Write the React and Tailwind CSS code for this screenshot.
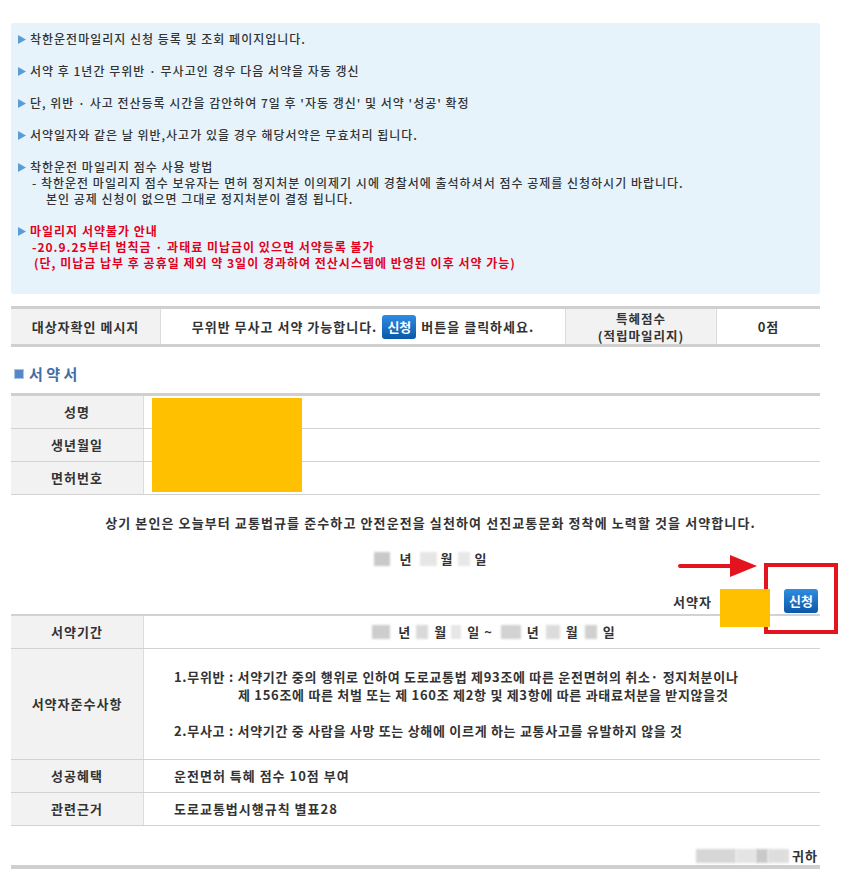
import React from "react";

const Tri = () => (
  <svg width="8" height="9" viewBox="0 0 8 9" className="shrink-0 mt-[3.5px]">
    <path d="M0 0 L8 4.5 L0 9 Z" fill="#5b9bd8" />
  </svg>
);

const Item = ({ children, red }) => (
  <div className={red ? "flex gap-[4px] font-bold text-[#e2001c]" : "flex gap-[4px]"}>
    <Tri />
    <div>{children}</div>
  </div>
);

const Btn = () => (
  <span className="inline-flex w-[34px] h-[24px] items-center justify-center rounded-[3px] bg-linear-to-b from-[#2e8de2] to-[#0a58a8] text-white font-bold text-[13px] tracking-normal">
    신청
  </span>
);

const Blk = ({ className }) => (
  <span className={"inline-block h-[14px] blur-[1px] " + className} />
);

const Label = ({ children }) => (
  <div className="w-[133px] shrink-0 bg-[#f2f2f2] border-r border-[#dcdcdc] flex items-center justify-center">
    {children}
  </div>
);

export default function App() {
  return (
    <div className="relative w-[856px] h-[875px] bg-white pl-[11px] pr-[36px] pt-[23px] font-['Noto_Sans_CJK_KR','Noto_Sans',sans-serif] text-[#333] tracking-[1px]">
      {/* 안내 박스 */}
      <div className="bg-[#e6f3fb] rounded-[3px] pl-[7px] pt-[8px] pb-[23px] text-[12px] leading-4 text-[#333] font-medium">
        <div className="flex flex-col gap-4">
          <Item>착한운전마일리지 신청 등록 및 조회 페이지입니다.</Item>
          <Item>서약 후 1년간 무위반 · 무사고인 경우 다음 서약을 자동 갱신</Item>
          <Item>단, 위반 · 사고 전산등록 시간을 감안하여 7일 후 '자동 갱신' 및 서약 '성공' 확정</Item>
          <Item>서약일자와 같은 날 위반,사고가 있을 경우 해당서약은 무효처리 됩니다.</Item>
          <Item>
            <div>착한운전 마일리지 점수 사용 방법</div>
            <div className="pl-[2px]">- 착한운전 마일리지 점수 보유자는 면허 정지처분 이의제기 시에 경찰서에 출석하셔서 점수 공제를 신청하시기 바랍니다.</div>
            <div className="pl-[16px]">본인 공제 신청이 없으면 그대로 정지처분이 결정 됩니다.</div>
          </Item>
          <Item red>
            <div>마일리지 서약불가 안내</div>
            <div className="pl-[2px]">-20.9.25부터 범칙금 · 과태료 미납금이 있으면 서약등록 불가</div>
            <div className="pl-[4px]">(단, 미납금 납부 후 공휴일 제외 약 3일이 경과하여 전산시스템에 반영된 이후 서약 가능)</div>
          </Item>
        </div>
      </div>

      {/* 대상자확인 */}
      <div className="mt-[12px] flex h-[41px] border-y-[3px] border-[#cfcfcf] text-[13px] font-bold text-[#333]">
        <div className="w-[150px] bg-[#f2f2f2] border-r border-[#dcdcdc] flex items-center justify-center">
          대상자확인 메시지
        </div>
        <div className="w-[405px] border-r border-[#dcdcdc] flex items-center justify-center gap-[5px]">
          <span>무위반 무사고 서약 가능합니다.</span>
          <Btn />
          <span>버튼을 클릭하세요.</span>
        </div>
        <div className="w-[151px] bg-[#f2f2f2] border-r border-[#dcdcdc] flex flex-col items-center justify-center text-[12.5px] leading-[17px]">
          <span>특혜점수</span>
          <span>(적립마일리지)</span>
        </div>
        <div className="flex-1 flex items-center justify-center">0점</div>
      </div>

      {/* 서약서 제목 */}
      <div className="mt-[18px] h-[18px] flex items-center gap-[5px] pl-[3px] text-[15px] font-bold text-[#3f6fa6] tracking-normal">
        <span className="w-[10px] h-[10px] border border-[#a9c6e6] bg-[#5588c8]" />
        <span>서 약 서</span>
      </div>

      {/* 인적사항 */}
      <div className="relative mt-[10px] border-t-[3px] border-[#cfcfcf] text-[13px] font-bold">
        {["성명", "생년월일", "면허번호"].map((l) => (
          <div key={l} className="flex h-[33px] border-b border-[#d2d2d2]">
            <Label>{l}</Label>
            <div className="flex-1" />
          </div>
        ))}
        <div className="absolute left-[141px] top-[2px] w-[150px] h-[94px] bg-[#ffc000]" />
      </div>

      <div className="mt-[20px] pl-[30px] leading-4 text-[13px] font-bold text-center tracking-[1.1px]">
        상기 본인은 오늘부터 교통법규를 준수하고 안전운전을 실천하여 선진교통문화 정착에 노력할 것을 서약합니다.
      </div>

      <div className="mt-[20px] pl-[30px] h-4 flex items-center justify-center text-[13px] font-bold">
        <Blk className="w-[16px] bg-[#c9c9c9]" />
        <span className="ml-[10px]">년</span>
        <Blk className="ml-[7px] w-[17px] bg-[#e6e6e6]" />
        <span className="ml-[4px]">월</span>
        <Blk className="ml-[5px] w-[12px] bg-[#e8e8e8]" />
        <span className="ml-[4px]">일</span>
      </div>

      {/* 서약자 */}
      <div className="mt-[22px] h-[25px] flex justify-end pr-[2px] text-[13px] font-bold">
        <span className="self-center">서약자</span>
        <div className="relative z-10 ml-[8px] w-[50px] h-[38px] bg-[#ffc000]" />
        <div className="ml-[14px]">
          <Btn />
        </div>
      </div>

      {/* 서약내용 */}
      <div className="border-t-2 border-[#d2d2d2] text-[13px] font-bold">
        <div className="flex h-[33px] border-b border-[#d2d2d2]">
          <Label>서약기간</Label>
          <div className="flex-1 flex items-center justify-center pl-[24px]">
            <Blk className="w-[18px] bg-[#cdcdcd]" />
            <span className="ml-[8px]">년</span>
            <Blk className="ml-[5px] w-[12px] bg-[#d9d9d9]" />
            <span className="ml-[6px]">월</span>
            <Blk className="ml-[4px] w-[10px] bg-[#e6e6e6]" />
            <span className="ml-[6px]">일 ~</span>
            <Blk className="ml-[8px] w-[20px] bg-[#d2d2d2]" />
            <span className="ml-[6px]">년</span>
            <Blk className="ml-[6px] w-[14px] bg-[#dcdcdc]" />
            <span className="ml-[6px]">월</span>
            <Blk className="ml-[6px] w-[12px] bg-[#d0d0d0]" />
            <span className="ml-[6px]">일</span>
          </div>
        </div>
        <div className="flex h-[111px] border-b border-[#d2d2d2]">
          <Label>서약자준수사항</Label>
          <div className="flex-1 pl-[30px] pt-[19px] leading-[18px] tracking-[0.7px]">
            <div>1.무위반 : 서약기간 중의 행위로 인하여 도로교통법 제93조에 따른 운전면허의 취소· 정지처분이나</div>
            <div className="pl-[64px]">제 156조에 따른 처벌 또는 제 160조 제2항 및 제3항에 따른 과태료처분을 받지않을것</div>
            <div className="mt-[18px]">2.무사고 : 서약기간 중 사람을 사망 또는 상해에 이르게 하는 교통사고를 유발하지 않을 것</div>
          </div>
        </div>
        <div className="flex h-[33px] border-b border-[#d2d2d2]">
          <Label>성공혜택</Label>
          <div className="flex-1 flex items-center pl-[30px]">운전면허 특혜 점수 10점 부여</div>
        </div>
        <div className="flex h-[33px] border-b border-[#d2d2d2]">
          <Label>관련근거</Label>
          <div className="flex-1 flex items-center pl-[30px]">도로교통법시행규칙 별표28</div>
        </div>
      </div>

      <div className="mt-[22px] h-4 flex items-center justify-end pr-[2px] text-[13px] font-bold">
        <Blk className="w-[40px] bg-[#d6d6d6]" />
        <Blk className="w-[20px] bg-[#e4e4e4]" />
        <Blk className="w-[12px] bg-[#c9c9c9]" />
        <Blk className="w-[21px] bg-[#dedede]" />
        <span className="ml-[3px]">귀하</span>
      </div>
      <div className="mt-[1px] h-[4px] bg-[#cfcfcf]" />

      {/* 주석 표시 */}
      <svg className="absolute left-[676px] top-[553px]" width="84" height="27" viewBox="0 0 84 27">
        <rect x="2" y="11" width="54" height="4" rx="2" fill="#e3141e" />
        <polygon points="54,2 81,13 54,24" fill="#e3141e" />
      </svg>
      <div className="absolute left-[764px] top-[563px] w-[74px] h-[71px] border-4 border-[#e3141e]" />
    </div>
  );
}
